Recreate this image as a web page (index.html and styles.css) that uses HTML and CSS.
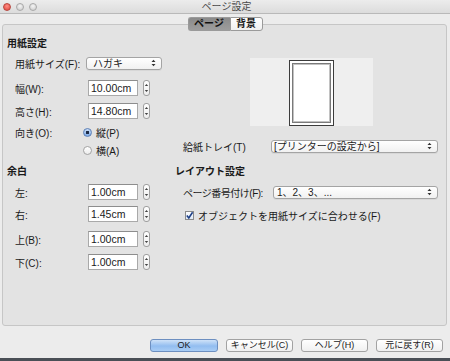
FILE: index.html
```
<!DOCTYPE html>
<html lang="ja">
<head>
    <meta charset="UTF-8">
    <title>ページ設定</title>
    <link rel="stylesheet" href="styles.css">
</head>
<body>
    <div class="window">
        <div class="titlebar">
            <div class="lights">
                <span class="light red"></span>
                <span class="light"></span>
                <span class="light"></span>
            </div>
            <div class="title">ページ設定</div>
        </div>

        <div class="content">
            <div class="tabs">
                <span class="tab active">ページ</span>
                <span class="tab">背景</span>
            </div>

            <div class="panel">
                <!-- 用紙設定 -->
                <div class="section top">
                    <div class="col-left">
                        <h3>用紙設定</h3>
                        <div class="row r1">
                            <label class="lbl">用紙サイズ(F):</label>
                            <div class="popup size">ハガキ<svg class="arrows" width="5" height="8" viewBox="0 0 5 8"><path d="M0.5 3 L2.5 0.8 L4.5 3 Z M0.5 5 L2.5 7.2 L4.5 5 Z" fill="#333"/></svg></div>
                        </div>
                        <div class="row r2">
                            <label class="lbl">幅(W):</label>
                            <div class="field">10.00cm</div>
                            <div class="stepper"><svg width="7" height="16" viewBox="0 0 7 16"><path d="M1.8 6 L3.5 4 L5.2 6 Z M1.8 10 L3.5 12 L5.2 10 Z" fill="#444"/></svg></div>
                        </div>
                        <div class="row r3">
                            <label class="lbl">高さ(H):</label>
                            <div class="field">14.80cm</div>
                            <div class="stepper"><svg width="7" height="16" viewBox="0 0 7 16"><path d="M1.8 6 L3.5 4 L5.2 6 Z M1.8 10 L3.5 12 L5.2 10 Z" fill="#444"/></svg></div>
                        </div>
                        <div class="row r4">
                            <label class="lbl lbl-radio">向き(O):</label>
                            <span class="radio checked"></span>
                            <span class="opt">縦(P)</span>
                        </div>
                        <div class="row r5">
                            <label class="lbl lbl-radio"></label>
                            <span class="radio"></span>
                            <span class="opt">横(A)</span>
                        </div>
                    </div>
                    <div class="col-right">
                        <div class="preview">
                            <div class="page"><div class="page-inner"></div></div>
                        </div>
                        <div class="row tray">
                            <label class="lbl-tray">給紙トレイ(T)</label>
                            <div class="popup wide">[プリンターの設定から]<svg class="arrows" width="5" height="8" viewBox="0 0 5 8"><path d="M0.5 3 L2.5 0.8 L4.5 3 Z M0.5 5 L2.5 7.2 L4.5 5 Z" fill="#333"/></svg></div>
                        </div>
                    </div>
                </div>

                <!-- 余白 / レイアウト設定 -->
                <div class="section bottom">
                    <div class="col-left">
                        <h3>余白</h3>
                        <div class="row m1">
                            <label class="lbl">左:</label>
                            <div class="field">1.00cm</div>
                            <div class="stepper"><svg width="7" height="16" viewBox="0 0 7 16"><path d="M1.8 6 L3.5 4 L5.2 6 Z M1.8 10 L3.5 12 L5.2 10 Z" fill="#444"/></svg></div>
                        </div>
                        <div class="row m2">
                            <label class="lbl">右:</label>
                            <div class="field">1.45cm</div>
                            <div class="stepper"><svg width="7" height="16" viewBox="0 0 7 16"><path d="M1.8 6 L3.5 4 L5.2 6 Z M1.8 10 L3.5 12 L5.2 10 Z" fill="#444"/></svg></div>
                        </div>
                        <div class="row m3">
                            <label class="lbl">上(B):</label>
                            <div class="field">1.00cm</div>
                            <div class="stepper"><svg width="7" height="16" viewBox="0 0 7 16"><path d="M1.8 6 L3.5 4 L5.2 6 Z M1.8 10 L3.5 12 L5.2 10 Z" fill="#444"/></svg></div>
                        </div>
                        <div class="row m4">
                            <label class="lbl">下(C):</label>
                            <div class="field">1.00cm</div>
                            <div class="stepper"><svg width="7" height="16" viewBox="0 0 7 16"><path d="M1.8 6 L3.5 4 L5.2 6 Z M1.8 10 L3.5 12 L5.2 10 Z" fill="#444"/></svg></div>
                        </div>
                    </div>
                    <div class="col-right">
                        <h3>レイアウト設定</h3>
                        <div class="row l1">
                            <label class="lbl-num">ページ番号付け(F):</label>
                            <div class="popup num">1、2、3、...<svg class="arrows" width="5" height="8" viewBox="0 0 5 8"><path d="M0.5 3 L2.5 0.8 L4.5 3 Z M0.5 5 L2.5 7.2 L4.5 5 Z" fill="#333"/></svg></div>
                        </div>
                        <div class="row l2">
                            <span class="check"><svg width="9" height="9" viewBox="0 0 9 9"><path d="M1.8 4.6 L3.8 7 L7.6 1.2" fill="none" stroke="#1d3f86" stroke-width="1.6"/></svg></span>
                            <span class="opt">オブジェクトを用紙サイズに合わせる(F)</span>
                        </div>
                    </div>
                </div>
            </div>

            <div class="buttons">
                <button class="btn default">OK</button>
                <button class="btn">キャンセル(C)</button>
                <button class="btn">ヘルプ(H)</button>
                <button class="btn">元に戻す(R)</button>
            </div>
        </div>
    </div>
</body>
</html>
```

FILE: styles.css
```
body {
    margin: 0;
    background-color: #4a4f56;
    font-family: "Liberation Sans", "Noto Sans CJK JP", sans-serif;
    font-size: 10px;
    color: #1a1a1a;
}
.window {
    width: 450px;
    height: 358px;
    background-color: #ececec;
}
.titlebar {
    height: 13px;
    border-bottom: 1px solid #b9b9b9;
    background: linear-gradient(#ececec, #dcdcdc);
    display: flex;
    align-items: center;
}
.lights {
    display: flex;
    gap: 5px;
    padding-left: 3px;
}
.light {
    width: 8px;
    height: 8px;
    border-radius: 50%;
    box-sizing: border-box;
    border: 1px solid #a8a8a8;
    background: radial-gradient(circle at 50% 35%, #f4f4f4, #c9c9c9);
}
.light.red {
    border-color: #b8463e;
    background: radial-gradient(circle at 50% 35%, #ff8f86, #e0433a);
}
.title {
    flex: 1;
    text-align: center;
    color: #4a4a4a;
    font-size: 10px;
    line-height: 13px;
    margin-right: 34px;
}
.content {
    padding: 3px 3px 0 2px;
}
.tabs {
    display: flex;
    justify-content: center;
    position: relative;
    z-index: 1;
    height: 14px;
    margin-left: 1px;
}
.tab {
    box-sizing: border-box;
    height: 14px;
    line-height: 12px;
    border: 1px solid #9a9a9a;
    background: linear-gradient(#ffffff, #f0f0f0);
    font-weight: bold;
    font-size: 10px;
    text-align: center;
    width: 33px;
    border-radius: 0 3px 3px 0;
}
.tab.active {
    width: 42px;
    border-right: none;
    border-radius: 3px 0 0 3px;
    background: linear-gradient(#8a8a8a, #9d9d9d);
    color: #111;
}
.panel {
    margin-top: -7px;
    height: 300px;
    border: 1px solid #c6c6c6;
    border-radius: 3px;
    background-color: #e3e3e3;
}
.section {
    display: flex;
}
.section.top {
    padding-top: 12px;
    height: 120px;
}
.section.bottom {
    padding-top: 8px;
}
.col-left {
    width: 168px;
    padding-left: 4px;
}
.col-right {
    flex: 1;
}
h3 {
    margin: 0;
    font-size: 10px;
    line-height: 14px;
    font-weight: bold;
}
.row {
    display: flex;
    align-items: center;
    height: 14px;
    white-space: nowrap;
}
.col-left .row {
    padding-left: 8px;
}
.lbl {
    width: 71px;
    flex-shrink: 0;
}
.lbl-radio {
    width: 68px;
}
.r1 { margin-top: 5px; }
.r2 { margin-top: 10px; height: 16px; }
.r3 { margin-top: 7px; height: 16px; }
.r4 { margin-top: 6px; }
.r5 { margin-top: 4px; }
.m1 { margin-top: 5px; height: 16px; }
.m2 { margin-top: 6px; height: 16px; }
.m3 { margin-top: 9px; height: 16px; }
.m4 { margin-top: 7px; height: 16px; }
.popup {
    box-sizing: border-box;
    height: 13px;
    line-height: 11px;
    border: 1px solid #a4a4a4;
    border-radius: 3px;
    background: linear-gradient(#ffffff, #f1f1f1);
    padding-left: 5px;
    position: relative;
    box-shadow: 0 1px 0 rgba(0, 0, 0, 0.05);
}
.popup .arrows {
    position: absolute;
    right: 5px;
    top: 1.5px;
}
.popup.size {
    width: 76px;
    padding-left: 6px;
}
.popup.wide {
    width: 167px;
    padding-left: 2px;
}
.popup.num {
    width: 165px;
    padding-left: 3px;
}
.field {
    box-sizing: border-box;
    width: 50px;
    height: 16px;
    margin-left: 2px;
    border: 1px solid #a9a9a9;
    border-top-color: #8d8d8d;
    background-color: #fff;
    line-height: 14px;
    padding-left: 2px;
    font-size: 10.5px;
}
.stepper {
    box-sizing: border-box;
    width: 7px;
    height: 16px;
    margin-left: 5px;
    border: 1px solid #a0a0a0;
    border-radius: 3px;
    background: linear-gradient(#ffffff, #ededed);
    display: flex;
}
.stepper svg {
    margin: -1px;
}
.radio {
    box-sizing: border-box;
    width: 9px;
    height: 9px;
    border-radius: 50%;
    border: 1px solid #a3a3a3;
    background: linear-gradient(#ffffff, #ececec);
    margin-right: 4px;
    flex-shrink: 0;
}
.radio.checked {
    border-color: #5b7fb6;
    background: radial-gradient(circle, #1c2a44 0, #1c2a44 1.4px, transparent 1.8px), linear-gradient(#c9ddf6, #7eaae6);
}
.preview {
    margin: 21px 0 0 75px;
    width: 123px;
    height: 68px;
    background-color: #efefef;
}
.page {
    box-sizing: border-box;
    margin-left: 39px;
    position: relative;
    top: 2px;
    width: 45px;
    height: 66px;
    border: 1px solid #3c3c3c;
    background-color: #fff;
    padding: 2px;
}
.page-inner {
    box-sizing: border-box;
    height: 100%;
    border: 1px solid #7a7a7a;
    box-shadow: inset 0 0 0 1px #c2c2c2;
}
.tray {
    margin-top: 13px;
}
.lbl-tray {
    width: 88px;
    flex-shrink: 0;
}
.col-right .row {
    padding-left: 8px;
}
.l1 {
    margin-top: 6px;
}
.lbl-num {
    width: 90px;
    flex-shrink: 0;
    letter-spacing: -0.5px;
}
.l2 {
    margin-top: 9px;
}
.check {
    box-sizing: border-box;
    width: 9px;
    height: 9px;
    margin-left: 2px;
    margin-right: 4px;
    border: 1px solid #8c8c8c;
    background: linear-gradient(#ffffff, #dfe9f6);
    display: flex;
}
.check svg {
    margin: -1px;
}
.buttons {
    display: flex;
    justify-content: flex-end;
    gap: 8px;
    margin-top: 13px;
    padding-right: 4px;
}
.btn {
    box-sizing: border-box;
    width: 67px;
    height: 13px;
    padding: 0;
    border: 1px solid #a2a2a2;
    border-radius: 3px;
    background: linear-gradient(#ffffff, #f0f0f0);
    font-family: "Liberation Sans", "Noto Sans CJK JP", sans-serif;
    font-size: 9px;
    line-height: 11px;
    white-space: nowrap;
    color: #1a1a1a;
}
.btn.default {
    width: 68px;
    border-color: #6d8fc0;
    background: linear-gradient(#cfe2f8, #92bdf0 55%, #a9cdf5);
}
```
